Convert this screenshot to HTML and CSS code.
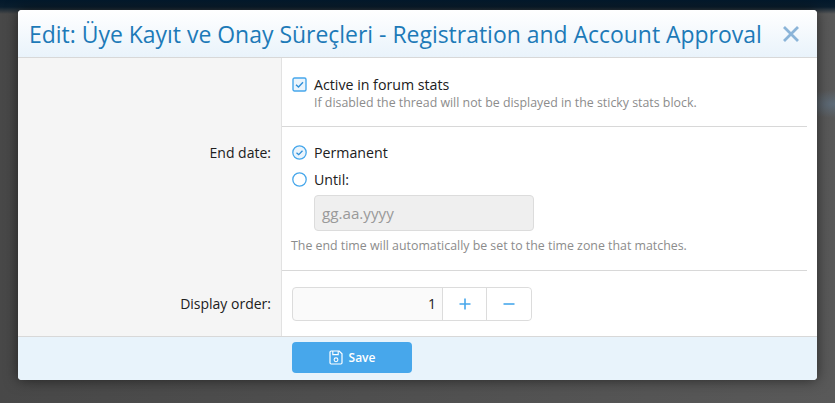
FILE: index.html
```html
<!DOCTYPE html>
<html lang="en">
<head>
<meta charset="utf-8">
<title>Edit</title>
<link rel="stylesheet" href="styles.css">
</head>
<body>
<div class="modal">
  <header class="head">
    <h1 class="title">Edit: Üye Kayıt ve Onay Süreçleri - Registration and Account Approval</h1>
    <svg class="close" width="18" height="18" viewBox="0 0 18 18"><path d="M2 2l14 14M16 2L2 16" fill="none" stroke="#8bb4d8" stroke-width="2.8"/></svg>
  </header>
  <div class="form">
    <div class="row row-a">
      <div class="label"></div>
      <div class="field">
        <div class="opt">
          <svg class="ico" width="15" height="15" viewBox="0 0 15 15"><rect x="1" y="1" width="13" height="13" rx="1.500" fill="#eaf4fc" stroke="#47a7eb" stroke-width="1.400"/><path d="M4 7.700l2.500 2.300 4.500-4.700" fill="none" stroke="#2f8fd8" stroke-width="1.400"/></svg>
          <span>Active in forum stats</span>
        </div>
        <p class="hint hint-a">If disabled the thread will not be displayed in the sticky stats block.</p>
      </div>
    </div>
    <div class="row row-b">
      <div class="label">End date:</div>
      <div class="field">
        <div class="opt">
          <svg class="ico" width="15" height="15" viewBox="0 0 15 15"><circle cx="7.500" cy="7.500" r="6.700" fill="#eaf4fc" stroke="#47a7eb" stroke-width="1.300"/><path d="M4.500 7.700l2.200 2 3.800-4" fill="none" stroke="#2f8fd8" stroke-width="1.300"/></svg>
          <span>Permanent</span>
        </div>
        <div class="opt opt-2">
          <svg class="ico" width="15" height="15" viewBox="0 0 15 15"><circle cx="7.500" cy="7.500" r="6.700" fill="#fff" stroke="#47a7eb" stroke-width="1.300"/></svg>
          <span>Until:</span>
        </div>
        <div class="date">gg.aa.yyyy</div>
        <p class="hint hint-b">The end time will automatically be set to the time zone that matches.</p>
      </div>
    </div>
    <div class="row row-c">
      <div class="label">Display order:</div>
      <div class="field">
        <div class="stepper">
          <div class="num">1</div>
          <div class="step">
            <svg width="12" height="12" viewBox="0 0 12 12"><path d="M6 .5v11M.5 6h11" stroke="#47a7eb" stroke-width="1.600" fill="none"/></svg>
          </div>
          <div class="step step-last">
            <svg width="12" height="12" viewBox="0 0 12 12"><path d="M.5 6h11" stroke="#47a7eb" stroke-width="1.600" fill="none"/></svg>
          </div>
        </div>
      </div>
    </div>
  </div>
  <footer class="foot">
    <div class="foot-gap"></div>
    <button class="save" type="button">
      <svg width="14" height="15" viewBox="0 0 14 15"><path d="M1 2.200C1 1.500 1.500 1 2.200 1h8L13 3.800v9c0 .7-.5 1.200-1.200 1.200H2.200C1.500 14 1 13.500 1 12.800z" fill="none" stroke="#fff" stroke-width="1.200"/><path d="M3.800 1v3.600h5.400V1" fill="none" stroke="#fff" stroke-width="1.100"/><circle cx="7" cy="9.800" r="1.900" fill="none" stroke="#fff" stroke-width="1.100"/></svg>
      <span>Save</span>
    </button>
  </footer>
</div>
</body>
</html>
```
FILE: styles.css
```css
* { box-sizing: border-box; }
html, body { margin: 0; height: 100%; }
body {
  height: 403px;
  overflow: hidden;
  padding: 10px 18px 0;
  background:
    linear-gradient(#03192c 0, #0a1e2e 7px, rgba(60, 60, 60, 0) 14px),
    radial-gradient(40px 14px at 100% 104px, #5d6b78, rgba(93, 107, 120, 0)),
    linear-gradient(90deg, #484848, #505050 50%, #595959);
  font-family: "Open Sans", sans-serif;
  color: #202020;
}
.modal {
  width: 799px;
  height: 370px;
  display: flex;
  flex-direction: column;
  background: #fff;
  border-radius: 4px;
  overflow: hidden;
  box-shadow: 0 0 14px rgba(0, 0, 0, .55);
}
.head {
  height: 48px;
  flex: none;
  display: flex;
  align-items: center;
  justify-content: space-between;
  padding: 0 17px 0 11px;
  background: linear-gradient(#ffffff, #e9f3fb);
  border-bottom: 1px solid #d8d8d8;
}
.title {
  margin: 0;
  font-size: 22.95px;
  font-weight: 400;
  line-height: 30px;
  color: #1d7ab8;
  white-space: nowrap;
}
.close { display: block; }
.form { flex: 1; display: flex; flex-direction: column; }
.row { display: flex; }
.row-a { height: 69px; }
.row-b { height: 144px; }
.row-c { height: 65px; }
.label {
  width: 264px;
  flex: none;
  padding-right: 10px;
  text-align: right;
  background: #f5f5f5;
  border-right: 1px solid #e2e2e2;
  font-size: 14px;
  line-height: 20px;
}
.field {
  flex: 1;
  margin-right: 10px;
  padding-left: 10px;
  border-bottom: 1px solid #d8d8d8;
}
.row-c .field { margin-right: 0; border-bottom: 0; }
.row-a .field { padding-top: 16px; }
.row-b .field { padding-top: 15px; }
.row-b .label { padding-top: 16px; }
.row-c .label { padding-top: 23px; }
.row-c .field { padding-top: 16px; }
.opt { display: flex; align-items: center; height: 20px; font-size: 14.2px; gap: 7px; }
.opt-2 { margin-top: 7px; }
.ico { display: block; flex: none; }
.hint { margin: 0; font-size: 12.36px; line-height: 16px; color: #8c8c8c; white-space: nowrap; }
.hint-a { padding-left: 22px; margin-top: 1px; }
.hint-b { margin-top: 7px; margin-left: -1px; }
.date {
  width: 220px;
  height: 36px;
  margin: 6px 0 0 22px;
  padding: 0 7px;
  display: flex;
  align-items: center;
  background: #efefef;
  border: 1px solid #dcdcdc;
  border-radius: 4px;
  color: #999;
  font-size: 15.2px;
}
.stepper {
  width: 240px;
  height: 34px;
  display: flex;
  background: #fafafa;
  border: 1px solid #dcdcdc;
  border-radius: 4px;
}
.num { flex: 1; text-align: right; padding-right: 6px; font-size: 14px; line-height: 32px; }
.step { width: 44px; flex: none; display: flex; align-items: center; justify-content: center; background: #fff; border-left: 1px solid #dcdcdc; }
.step-last { width: 45px; border-radius: 0 4px 4px 0; }
.foot {
  height: 44px;
  flex: none;
  display: flex;
  background: #e8f3fb;
  border-top: 1px solid #d8d8d8;
}
.foot-gap { width: 274px; flex: none; }
.save {
  width: 120px;
  height: 31px;
  margin-top: 5px;
  display: flex;
  align-items: center;
  justify-content: center;
  gap: 6px;
  border: 0;
  border-radius: 4px;
  background: #47a7eb;
  color: #fff;
  font: 600 12px "Open Sans", sans-serif;
}
```
